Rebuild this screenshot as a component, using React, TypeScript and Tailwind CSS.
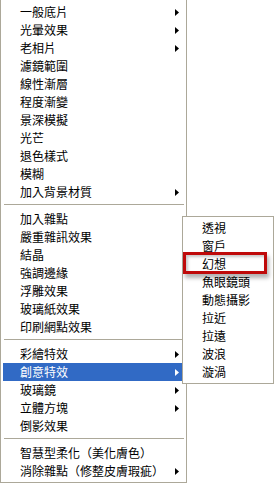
type Entry = { label: string; sub?: boolean; active?: boolean } | 'sep';

const mainItems: Entry[] = [
  { label: '一般底片', sub: true },
  { label: '光暈效果', sub: true },
  { label: '老相片', sub: true },
  { label: '濾鏡範圍' },
  { label: '線性漸層' },
  { label: '程度漸變' },
  { label: '景深模擬' },
  { label: '光芒' },
  { label: '退色樣式' },
  { label: '模糊' },
  { label: '加入背景材質', sub: true },
  'sep',
  { label: '加入雜點' },
  { label: '嚴重雜訊效果' },
  { label: '結晶' },
  { label: '強調邊緣' },
  { label: '浮雕效果' },
  { label: '玻璃紙效果' },
  { label: '印刷網點效果' },
  'sep',
  { label: '彩繪特效', sub: true },
  { label: '創意特效', sub: true, active: true },
  { label: '玻璃鏡', sub: true },
  { label: '立體方塊', sub: true },
  { label: '倒影效果' },
  'sep',
  { label: '智慧型柔化（美化膚色）' },
  { label: '消除雜點（修整皮膚瑕疵）', sub: true },
];

const subItems = ['透視', '窗戶', '幻想', '魚眼鏡頭', '動態攝影', '拉近', '拉遠', '波浪', '漩渦'];

function Arrow({ white }: { white?: boolean }) {
  return (
    <svg width="4" height="7" viewBox="0 0 4 7" className="mr-[5px] shrink-0">
      <path d="M0 0 L4 3.5 L0 7 Z" fill={white ? '#ffffff' : '#000000'} />
    </svg>
  );
}

export default function App() {
  return (
    <div
      className="relative w-[274px] h-[483px] bg-white overflow-hidden text-[12px] leading-[18px] text-black"
      style={{ fontFamily: '"Noto Sans CJK TC", "Noto Sans CJK SC", sans-serif' }}
    >
      {/* Main menu */}
      <div className="w-[187px] border-l border-r border-b border-[#aca899] pt-[3px] pb-[2px]">
        {mainItems.map((item, i) =>
          item === 'sep' ? (
            <div key={i} className="h-[9px] pt-[3px] ml-[3px] mr-[2px]">
              <div className="h-px bg-[#aca899]" />
            </div>
          ) : (
            <div
              key={i}
              className={`h-[18px] mx-[2px] flex items-center pl-[17px] ${
                item.active ? 'bg-[#316ac5] text-white' : ''
              }`}
            >
              <span className="flex-1 whitespace-nowrap">{item.label}</span>
              {item.sub && <Arrow white={item.active} />}
            </div>
          )
        )}
      </div>

      {/* Submenu */}
      <div className="absolute left-[182px] top-[216px] w-[92px] bg-white border border-[#aca899] pt-[2px] pb-[2px]">
        {subItems.map((s) => (
          <div key={s} className="h-[18px] pl-[19px] flex items-center whitespace-nowrap">
            {s}
          </div>
        ))}
      </div>

      {/* Highlight box */}
      <div className="absolute left-[183px] top-[252px] w-[84px] h-[22px] border-[3px] border-[#bf0a0a] shadow-[inset_2px_2px_3px_rgba(0,0,0,0.22),2px_4px_4px_rgba(0,0,0,0.3)]" />
    </div>
  );
}
